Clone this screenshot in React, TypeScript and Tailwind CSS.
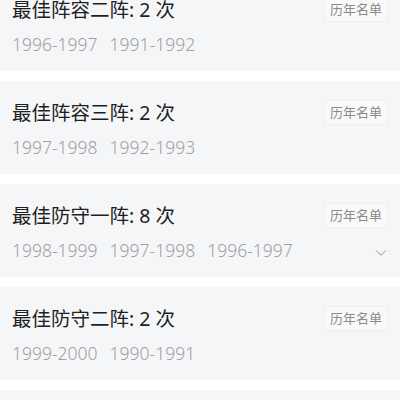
import { ChevronDown } from "lucide-react";

const honors = [
  { title: "最佳阵容二阵", count: 2, years: ["1996-1997", "1991-1992"] },
  { title: "最佳阵容三阵", count: 2, years: ["1997-1998", "1992-1993"] },
  { title: "最佳防守一阵", count: 8, years: ["1998-1999", "1997-1998", "1996-1997"], more: true },
  { title: "最佳防守二阵", count: 2, years: ["1999-2000", "1990-1991"] },
  { title: "最佳新秀一阵", count: 1, years: ["1989-1990"] },
];

const HonorCard = (props: { title: string; count: number; years: string[]; more?: boolean }) => {
  return (
    <div className="relative h-[93px] bg-[#f5f6f8] px-3 pt-[19px]">
      <div className="flex items-start justify-between">
        <h3 className="text-[19.5px] leading-[26px] text-[#1f1f1f]">
          {props.title}: {props.count} 次
        </h3>
        <span className="rounded-[3px] border border-[#eceef0] bg-[#f8f9fa] px-[5px] text-[13px] leading-[23px] text-[#8a8a8a]">
          历年名单
        </span>
      </div>
      <div className="mt-[10px] flex gap-3 text-[17.5px] font-light leading-[22px] text-[#a0a0a4]">
        {props.years.map((y) => (
          <span key={y}>{y}</span>
        ))}
      </div>
      {props.more && (
        <ChevronDown size={18} strokeWidth={1.2} className="absolute right-[10px] top-[60px] text-[#8a8a8a]" />
      )}
    </div>
  );
};

export default function App() {
  return (
    <div
      className="h-[400px] w-[400px] overflow-hidden bg-white"
      style={{ fontFamily: '"Noto Sans", "Noto Sans CJK SC", sans-serif' }}
    >
      <div className="mt-[-22px] flex flex-col gap-[10px]">
        {honors.map((h) => (
          <HonorCard key={h.title} {...h} />
        ))}
      </div>
    </div>
  );
}
